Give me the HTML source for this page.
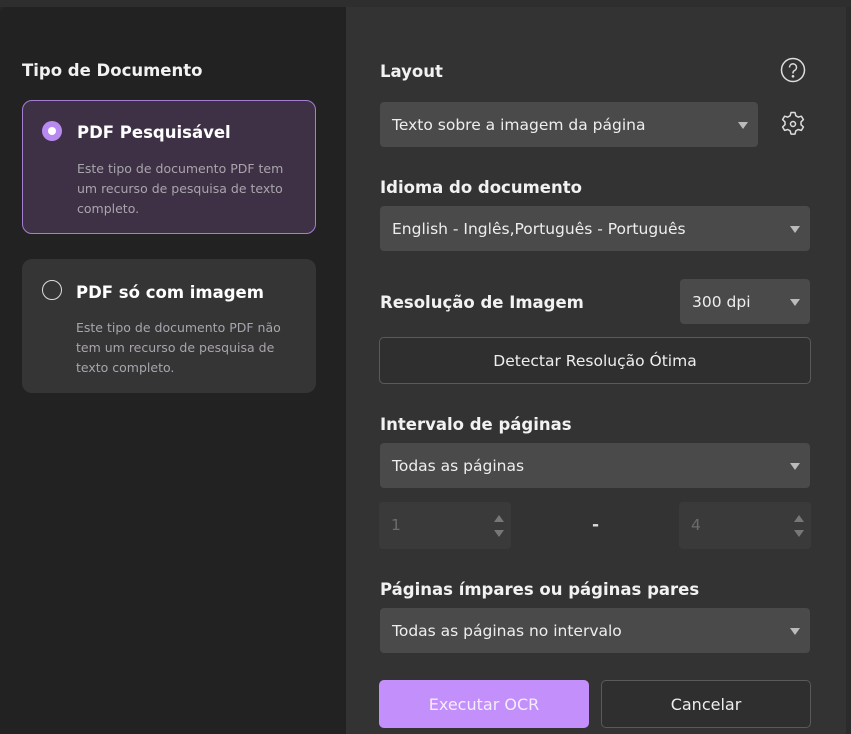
<!DOCTYPE html>
<html><head><meta charset="utf-8"><style>
*{box-sizing:border-box;margin:0;padding:0}
body{width:851px;height:734px;background:#262626;font-family:"DejaVu Sans","Liberation Sans",sans-serif;position:relative;overflow:hidden;color:#fff}
.top{position:absolute;left:0;top:0;width:851px;height:7px;background:#2e2e2e}
.left{position:absolute;left:0;top:7px;width:346px;height:727px;background:#222;border-top-left-radius:8px}
.right{position:absolute;left:346px;top:7px;width:500px;height:727px;background:#333}
.edge{position:absolute;left:846px;top:7px;width:5px;height:727px;background:#2b2b2b}
.abs{position:absolute}
h3{position:absolute;font-size:16.5px;font-weight:bold;color:#f2f2f2}
.card{position:absolute;left:22px;width:294px;border-radius:10px}
.card .t{position:absolute;left:54px;top:22px;font-size:16.5px;font-weight:bold}
.card .d{position:absolute;left:54px;top:58px;font-size:12.5px;line-height:20px;color:#a9a4ad;width:222px}
.radio{position:absolute;left:19px;top:20px;width:20px;height:20px;border-radius:50%}
.sel{position:absolute;left:380px;height:45px;background:#4a4a4a;border-radius:4px;font-size:15.5px;color:#eee;padding:1px 0 0 12px;line-height:45px}
.sel:after{content:"";position:absolute;right:10px;top:20px;border-left:5px solid transparent;border-right:5px solid transparent;border-top:7px solid #bbb}
.num{position:absolute;top:502px;width:132px;height:47px;background:#3a3a3a;border-radius:4px;color:#6c6c6c;font-size:15.5px;line-height:47px;padding-left:12px}
.num i{position:absolute;right:7px;border-left:5px solid transparent;border-right:5px solid transparent}
.btn{position:absolute;top:680px;height:48px;border-radius:5px;font-size:16px;text-align:center;line-height:50px}
</style></head><body>
<div class="top"></div><div class="left"></div><div class="right"></div><div class="edge"></div>

<h3 style="left:22px;top:61px">Tipo de Documento</h3>
<div class="card" style="top:100px;height:134px;background:#3e3146;border:1.5px solid #a47fd0">
 <div class="radio" style="background:#b88af0"><div style="position:absolute;left:6px;top:6px;width:8px;height:8px;border-radius:50%;background:#fff"></div></div>
 <div class="t">PDF Pesquisável</div>
 <div class="d">Este tipo de documento PDF tem um recurso de pesquisa de texto completo.</div>
</div>
<div class="card" style="top:259px;height:134px;background:#353535">
 <div class="radio" style="left:20px;top:21px;border:1.5px solid #ddd"></div>
 <div class="t" style="top:24px">PDF só com imagem</div>
 <div class="d" style="top:59px">Este tipo de documento PDF não tem um recurso de pesquisa de texto completo.</div>
</div>

<h3 style="left:380px;top:62px">Layout</h3>
<svg class="abs" style="left:780px;top:57px" width="26" height="26" viewBox="0 0 26 26" fill="none" stroke="#ddd" stroke-width="1.5"><circle cx="13" cy="13" r="11.5"/><path d="M9.5 10.5a3.5 3.5 0 1 1 5 3c-1 .6-1.5 1.2-1.5 2.3v.7"/><circle cx="13" cy="19.3" r=".6" fill="#ddd"/></svg>
<div class="sel" style="top:102px;width:378px">Texto sobre a imagem da página</div>
<svg class="abs" style="left:779px;top:110px" width="28" height="28" viewBox="0 0 28 28" fill="none" stroke="#ddd" stroke-width="1.5"><path d="M12 2.5h4l.8 3.2 2.4 1.4 3.2-.9 2 3.4-2.4 2.3v2.8l2.4 2.3-2 3.4-3.2-.9-2.4 1.4-.8 3.2h-4l-.8-3.2-2.4-1.4-3.2.9-2-3.4 2.4-2.3v-2.8L3.6 9.6l2-3.4 3.2.9 2.4-1.4z" stroke-linejoin="round"/><circle cx="14" cy="14" r="2.5"/></svg>

<h3 style="left:380px;top:178px">Idioma do documento</h3>
<div class="sel" style="top:206px;width:430px">English - Inglês,Português - Português</div>

<h3 style="left:380px;top:293px">Resolução de Imagem</h3>
<div class="sel" style="top:279px;left:680px;width:130px">300 dpi</div>
<div class="abs" style="left:379px;top:337px;width:432px;height:47px;border:1px solid #5a5a5a;border-radius:5px;background:#2f2f2f;text-align:center;line-height:47px;font-size:15.5px;color:#eee">Detectar Resolução Ótima</div>

<h3 style="left:380px;top:415px">Intervalo de páginas</h3>
<div class="sel" style="top:443px;width:430px">Todas as páginas</div>
<div class="num" style="left:379px">1<i style="top:13px;border-bottom:7px solid #777"></i><i style="top:28px;border-top:7px solid #777"></i></div>
<div class="abs" style="left:592px;top:515px;font-size:17px;color:#ddd;font-weight:bold">-</div>
<div class="num" style="left:679px">4<i style="top:13px;border-bottom:7px solid #777"></i><i style="top:28px;border-top:7px solid #777"></i></div>

<h3 style="left:380px;top:580px">Páginas ímpares ou páginas pares</h3>
<div class="sel" style="top:608px;width:430px">Todas as páginas no intervalo</div>

<div class="btn" style="left:379px;width:210px;background:#c28ffb;color:#f4ecff">Executar OCR</div>
<div class="btn" style="left:601px;width:210px;border:1px solid #5a5a5a;background:#2f2f2f;color:#eee;line-height:48px">Cancelar</div>
</body></html>
